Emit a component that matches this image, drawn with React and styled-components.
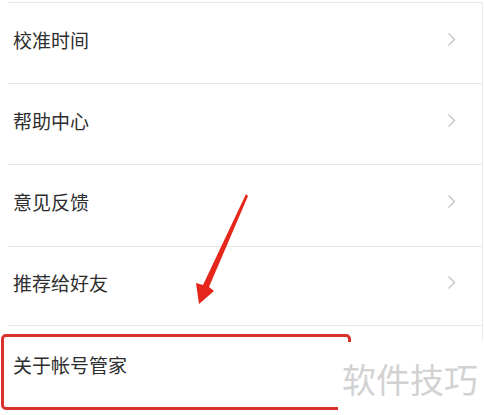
import React from "react";
import styled, { createGlobalStyle } from "styled-components";

const Global = createGlobalStyle`
  html, body { margin: 0; padding: 0; background: #fff; }
  body { font-family: "Noto Sans CJK SC", "Noto Sans", sans-serif; overflow: hidden; }
`;

const Page = styled.div`
  position: relative;
  width: 485px;
  height: 415px;
  overflow: hidden;
  background: #fff;
`;

const List = styled.div`
  display: flex;
  flex-direction: column;
  margin: 2px 2px 0 8px;
  border-right: 1px solid #ececec;
`;

const Row = styled.div`
  display: flex;
  align-items: center;
  justify-content: space-between;
  box-sizing: border-box;
  height: ${(p) => p.$h}px;
  border-top: 1px solid #e6e6e6;
  padding: 0 26px ${(p) => p.$pb}px 5px;
`;

const Label = styled.span`
  font-size: 19px;
  color: #2e2e2e;
  line-height: 1;
`;

const Chevron = () => (
  <svg width="9" height="15" viewBox="0 0 9 15">
    <path d="M1.5 1.5 L7.5 7.5 L1.5 13.5" fill="none" stroke="#c4c4c4" strokeWidth="1.4" />
  </svg>
);

const Highlight = styled.div`
  position: absolute;
  left: 1px;
  top: 334px;
  width: 344px;
  height: 70px;
  border: 3px solid #d8322a;
  border-radius: 5px;
`;

const Watermark = styled.div`
  position: absolute;
  left: 338px;
  top: 342px;
  right: 0;
  bottom: 0;
  background: #fff;
  display: flex;
  align-items: center;
  padding-left: 4px;
  font-size: 34px;
  color: #d2d2d2;
  line-height: 1;
`;

const ArrowSvg = styled.svg`
  position: absolute;
  left: 0;
  top: 0;
  pointer-events: none;
`;

const items = [
  { t: "校准时间", h: 81 },
  { t: "帮助中心", h: 81 },
  { t: "意见反馈", h: 82 },
  { t: "推荐给好友", h: 79 },
];

export default function App() {
  return (
    <Page>
      <Global />
      <List>
        {items.map(({ t, h }) => (
          <Row key={t} $h={h} $pb={8}>
            <Label>{t}</Label>
            <Chevron />
          </Row>
        ))}
        <Row $h={81} $pb={3}>
          <Label>关于帐号管家</Label>
        </Row>
      </List>
      <Highlight />
      <Watermark>软件技巧</Watermark>
      <ArrowSvg width="485" height="415" viewBox="0 0 485 415">
        <polygon
          points="246,194 248,196 209,287 214,291 199,304 196,283 203,285"
          fill="#e5261b"
        />
      </ArrowSvg>
    </Page>
  );
}
